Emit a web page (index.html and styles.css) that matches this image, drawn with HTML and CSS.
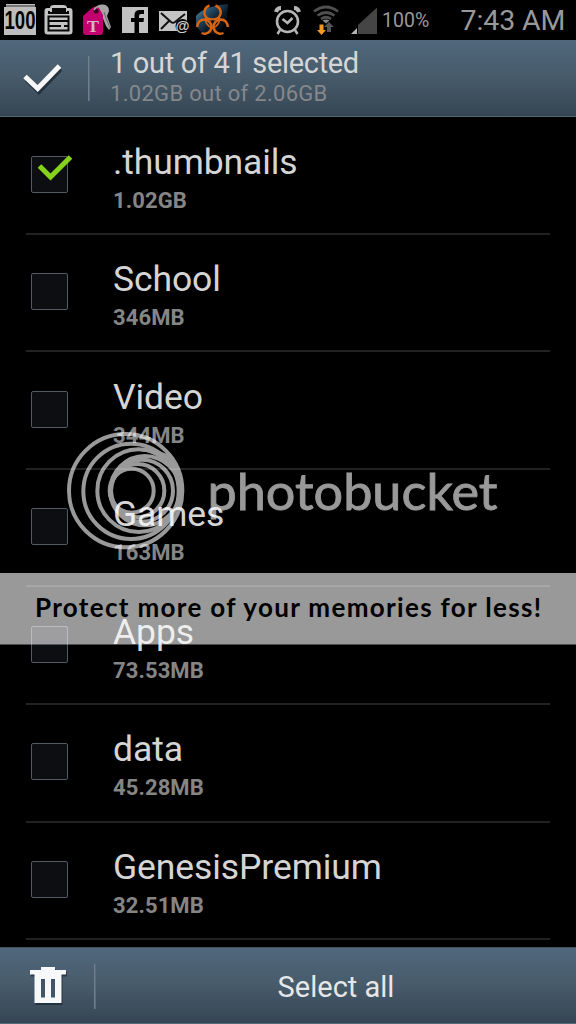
FILE: index.html
```html
<!DOCTYPE html>
<html lang="en">
<head>
<meta charset="utf-8">
<title>Select files</title>
<link rel="stylesheet" href="styles.css">
</head>
<body>
<div class="screen">
  <div class="status">
    <svg class="status-icons" width="240" height="40" viewBox="0 0 240 40">
      <defs>
        <linearGradient id="sky" x1="0" y1="0" x2="1" y2="1"><stop offset="0" stop-color="#6aa3b3"/><stop offset=".3" stop-color="#28506c"/><stop offset=".6" stop-color="#0b1826"/><stop offset="1" stop-color="#000"/></linearGradient>
      </defs>
      <path d="M6 4h29v3h1v28H4V7h2z" fill="#bdbdbd"/><path d="M6 6h29" stroke="#333"/>
      <text x="4.500" y="29" textLength="31" lengthAdjust="spacingAndGlyphs" class="hundred">100</text>
      <rect x="44.500" y="8" width="28" height="26.500" rx="3" fill="#c4c4c4"/>
      <path d="M50 11V8q0-3 4-3h9q4 0 4 3v3z" fill="#c4c4c4"/>
      <path d="M53 10V9h12v2H53zM49 11v2h19v-2M48.500 16.500h20v14h-20z" fill="none" stroke="#080808" stroke-width="2"/>
      <path d="M49 21h19M49 26h12M64 26h4" stroke="#080808" stroke-width="1.800"/>
      <path d="M96 10q1-6 7-5.500 6 .5 6 6.500l-2 5 4 11-2 3-3-4-4-10-5-2z" fill="#a5a5a5"/><path d="M104 12l2 6 4 10" stroke="#666" fill="none"/>
      <path d="M83 16l9-8q4-3 7 0l4 7v17q0 3-3 3H86q-3 0-3-3z" fill="#c30070"/>
      <circle cx="96" cy="11" r="2.500" fill="#37021f"/><path d="M94 10q3-5 9-4" stroke="#aaa" stroke-width="1.500" fill="none"/>
      <text x="87" y="31.500" textLength="12" lengthAdjust="spacingAndGlyphs" class="tee">T</text>
      <path d="M122 7h26v26h-26z" fill="#c2c2c2"/>
      <path d="M134.500 33V22H131v-4h3.500v-3q0-5 5.500-5h4v4h-3q-2 0-2 2v2h5l-.5 4H139v11z" fill="#000"/>
      <path d="M159 11h28v20h-28z" fill="#c4c4c4"/>
      <path d="M161 13l10 9q2 1.500 4 0l10-8M161 29l8-8M177 22l4 4" fill="none" stroke="#111" stroke-width="2"/>
      <circle cx="182.500" cy="26" r="7" fill="#000"/>
      <text x="175.500" y="30.500" textLength="14" lengthAdjust="spacingAndGlyphs" class="at">@</text>
      <path d="M196 16q8-10 32-12l-1 12q-2 14-13 18-15 2-18-10z" fill="url(#sky)"/>
      <g fill="none" stroke="#d76512" stroke-width="2.500">
        <path d="M209.500 5.500q-6 2.500-5 8.500 1.500 5.500 8 5.500t8-5.500q1-6-5-8.500"/>
        <path d="M197 27q1-7.500 7.500-7.500 6 1 7 6.500 0 6-5.500 7.500-2.500.5-4.500-.5"/>
        <path d="M228 27q-1-7.500-7.500-7.500-6 1-7 6.500 0 6 5.500 7.500 2.500.5 4.500-.5"/>
        <path d="M206 17q-2 8 6.500 11 8.500-3 6.500-11" stroke-width="1.600"/>
      </g><circle cx="212.500" cy="21.500" r="1.500" fill="#211"/>
    </svg>
    <svg class="signal-icons" width="108" height="40" viewBox="270 0 108 40">
      <g fill="none" stroke="#b5b5b5">
        <circle cx="287.500" cy="21.500" r="10.500" stroke-width="2.600"/>
        <path d="M282.500 19l5 4 5-5" stroke-width="2.500"/>
        <path d="M276 12q1-4 5-4M294 8q4 0 5 4" stroke-width="4"/><path d="M280 30l-2.500 4M295 30l2.500 4" stroke-width="2.500"/>
      </g>
      <g fill="none" stroke="#505050" stroke-width="2.700">
        <path d="M314 11.500q12-9 24 0M317.500 15.500q8.500-6 17 0M321 19q5-3.500 10 0"/>
      </g><path d="M322.500 20.500q3.500-2 7 0l-3.500 3z" fill="#888"/>
      <path d="M329 22l5 5h-3v5h-4v-5h-3z" fill="#555"/><path d="M319.500 24.500h4V30h2.500l-4.500 5-4.500-5h2.500z" fill="#f39a22"/>
      <path d="M358 34V25L377 7.500V34z" fill="#454545"/><path d="M351 34l6-6v6z" fill="#b5b5b5"/>
    </svg>
    <span class="battery">100%</span>
    <span class="clock">7:43 AM</span>
  </div>

  <div class="bar header">
    <svg class="done" width="88" height="76" viewBox="0 40 88 76">
      <path d="M25.500 77.500L38 89.500 59.500 67" transform="translate(1 2)" fill="none" stroke="#17212a" stroke-opacity=".65" stroke-width="5"/>
      <path d="M25 76.500L37.700 88.500 59.500 66" fill="none" stroke="#f7f7f7" stroke-width="5"/>
    </svg>
    <div class="rule"></div>
    <div class="heading"><div class="count">1 out of 41 selected</div><div class="space">1.02GB out of 2.06GB</div></div>
  </div>

  <div class="list">
    <div class="row"><div class="box"><svg width="48" height="40" viewBox="0 0 48 40"><path d="M7.500 10L18.500 21 38.500 1" fill="none" stroke="#85d41b" stroke-width="5"/></svg></div><div class="info"><div class="name">.thumbnails</div><div class="size">1.02GB</div></div></div>
    <div class="row"><div class="box"></div><div class="info"><div class="name">School</div><div class="size">346MB</div></div></div>
    <div class="row"><div class="box"></div><div class="info"><div class="name">Video</div><div class="size">344MB</div></div></div>
    <div class="row"><div class="box"></div><div class="info"><div class="name">Games</div><div class="size">163MB</div></div></div>
    <div class="row"><div class="box"></div><div class="info"><div class="name">Apps</div><div class="size">73.53MB</div></div></div>
    <div class="row"><div class="box"></div><div class="info"><div class="name">data</div><div class="size">45.28MB</div></div></div>
    <div class="row"><div class="box"></div><div class="info"><div class="name">GenesisPremium</div><div class="size">32.51MB</div></div></div>
  </div>

  <div class="bar footer">
    <svg width="94" height="76" viewBox="0 948 94 76">
      <path d="M30 970h11v-3h14v3h11v4.500h-4.500V1003h-27v-28.500H30z" fill="#141e26" fill-opacity=".6" transform="translate(1 2)"/>
      <path d="M30 970h11v-3h14v3h11v4.500h-4.500V1003h-27v-28.500H30z" fill="#f6f8fa"/>
      <path d="M41 979h4v18.500h-4zM51 979h4v18.500h-4z" fill="#435564"/>
    </svg>
    <div class="rule"></div>
    <div class="select">Select all</div>
  </div>

  <svg class="watermark" width="576" height="1024" viewBox="0 0 576 1024">
    <g fill="none" stroke="#fff" stroke-width="12" transform="translate(62 426) scale(.33333)">
      <circle cx="191" cy="194" r="170"/>
      <circle cx="207" cy="196" r="143"/>
      <circle cx="230" cy="194" r="124"/>
      <circle cx="249" cy="194" r="104"/>
      <circle cx="240" cy="194" r="93"/>
      <circle cx="227" cy="194" r="80"/>
      <circle cx="209" cy="194" r="66"/>
      <path d="M236 76C280 79 326 112 349 170L354 140 320 86 270 66z" fill="#fff" stroke="none"/>
      <path d="M146 175C154 142 182 98 245 92L205 113 170 137z" fill="#fff" stroke="none"/>
    </g>
    <text x="207.500" y="509.500" textLength="290" lengthAdjust="spacingAndGlyphs" class="brand">photobucket</text>
    <rect y="573" width="576" height="71.500" fill="#fff"/>
    <text x="35" y="616.500" textLength="506" lengthAdjust="spacing" class="promo">Protect more of your memories for less!</text>
  </svg>
</div>
</body>
</html>
```
FILE: styles.css
```css
body { margin: 0; background: #000; font-family: Roboto, sans-serif; }
.screen { position: relative; width: 576px; height: 1024px; overflow: hidden; background: #000; display: flex; flex-direction: column; }
.status { height: 40px; display: flex; flex: none; align-items: center; color: #999; white-space: nowrap; }
.signal-icons { margin-left: 30px; }
.battery { font-size: 19.5px; width: 78.5px; margin-left: 4px; padding-top: 1px; }
.clock { font-size: 28.5px; letter-spacing: -.1px; }
.hundred { font: bold 25px "Liberation Sans", sans-serif; fill: #050505; }
.tee { font: bold 17px "Liberation Serif", serif; fill: #d7b7c8; }
.at { font: bold 15px "Liberation Sans", sans-serif; fill: #d0d0d0; }
.bar { display: flex; flex: none; background: linear-gradient(#50687d, #475b6b 48%, #364553); box-sizing: border-box; }
.header { height: 77px; border-bottom: 1px solid #4d6674; }
.rule { width: 1px; height: 45px; margin-top: 16px; background: #70818e; border-right: 1px solid #566b7b; flex: none; }
.heading { margin-left: 20px; padding-top: 5px; white-space: nowrap; }
.count { font-size: 29px; line-height: 36px; letter-spacing: -.33px; color: #d6d6d6; }
.space { font-size: 22px; line-height: 25px; letter-spacing: .3px; color: #85888b; }
.list { height: 830px; flex: none; overflow: hidden; padding: 0 26px; }
.row { height: 117.6px; box-sizing: border-box; border-bottom: 2px solid #222; display: flex; }
.box { width: 35px; height: 35px; margin: 38.5px 0 0 5px; border: 1px solid #535a63; background: #0c0e11; border-radius: 2px; flex: none; }
.box svg { display: block; margin-top: -1px; overflow: visible; }
.info { margin-left: 45px; padding-top: 22.5px; white-space: nowrap; }
.name { font-size: 35.5px; line-height: 44px; letter-spacing: -.1px; color: #d5d5d5; }
.size { font-size: 22px; font-weight: 700; line-height: 33px; letter-spacing: .1px; color: #858585; }
.footer { height: 77px; border-top: 1px solid #40525e; border-bottom: 1px solid #526b79; }
.select { flex: 1; text-align: center; font-size: 29px; line-height: 78px; color: #e5e7e8; }
.watermark { position: absolute; inset: 0; opacity: .6; }
.brand { font: 51px Lato, sans-serif; fill: #fff; stroke: #fff; stroke-width: .8px; }
.promo { font: bold 26px Lato, sans-serif; fill: #000; }
```
